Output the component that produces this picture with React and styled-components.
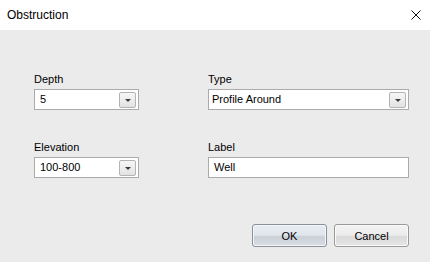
import React from "react";
import styled, { createGlobalStyle } from "styled-components";

const Global = createGlobalStyle`
  html, body { margin: 0; padding: 0; background: #ebebeb; }
  * { box-sizing: border-box; }
`;

const Window = styled.div`
  width: 430px;
  height: 262px;
  display: flex;
  flex-direction: column;
  background: #ebebeb;
  font-family: "Liberation Sans", Arial, sans-serif;
  font-size: 11px;
  color: #000;
  overflow: hidden;
`;

const TitleBar = styled.div`
  height: 30px;
  flex: none;
  background: #fff;
  display: flex;
  align-items: center;
  justify-content: space-between;
  padding: 0 9px 1px 7px;
`;

const Title = styled.span`
  font-family: "Segoe UI", "Liberation Sans", Arial, sans-serif;
  font-size: 12px;
  color: #000;
`;

const CloseIcon = styled.svg`
  width: 10px;
  height: 10px;
  display: block;
`;

const Body = styled.div`
  flex: 1;
  display: flex;
  flex-direction: column;
  padding: 43px 21px 0 34px;
`;

const FieldGrid = styled.div`
  display: grid;
  grid-template-columns: 105px 201px;
  column-gap: 69px;
  row-gap: 31px;
`;

const Field = styled.div`
  display: flex;
  flex-direction: column;
  gap: 3px;
`;

const Label = styled.label`
  height: 13px;
  line-height: 13px;
  white-space: nowrap;
`;

const Box = styled.div`
  height: 21px;
  background: #fff;
  border: 1px solid #ababab;
  display: flex;
  align-items: center;
  padding: 0 2px 0 ${(p) => p.$pad}px;
`;

const Value = styled.span`
  flex: 1;
  line-height: 19px;
  white-space: nowrap;
`;

const DropButton = styled.div`
  width: 17px;
  height: 16px;
  border: 1px solid #b4b4b4;
  border-radius: 2px;
  background: linear-gradient(#f6f6f6 0%, #ededed 50%, #e2e2e2 100%);
  display: flex;
  align-items: center;
  justify-content: center;
`;

const Arrow = styled.span`
  width: 0;
  height: 0;
  border-left: 3px solid transparent;
  border-right: 3px solid transparent;
  border-top: 3px solid #3c3c3c;
  margin-top: 1px;
`;

const ButtonRow = styled.div`
  display: flex;
  justify-content: flex-end;
  gap: 7px;
  margin-top: 46px;
`;

const Button = styled.button`
  width: 75px;
  height: 23px;
  font-family: "Liberation Sans", Arial, sans-serif;
  font-size: 11px;
  color: #000;
  border: 1px solid ${(p) => (p.$default ? "#8a9098" : "#9a9a9a")};
  border-radius: 3px;
  padding: 0;
  background: ${(p) =>
    p.$default
      ? "linear-gradient(#e7ecf1 0%, #e1e6ec 48%, #c9d0d8 56%, #d9dee4 100%)"
      : "linear-gradient(#f3f3f3 0%, #ececec 48%, #dadada 56%, #e6e6e6 100%)"};
  box-shadow: inset 0 0 0 1px ${(p) => (p.$default ? "#f3f6fa" : "#fafafa")};
`;

function Combo({ value, pad }) {
  return (
    <Box $pad={pad}>
      <Value>{value}</Value>
      <DropButton>
        <Arrow />
      </DropButton>
    </Box>
  );
}

export default function App() {
  return (
    <Window>
      <Global />
      <TitleBar>
        <Title>Obstruction</Title>
        <CloseIcon viewBox="0 0 10 10">
          <path d="M0.5 0.5 L9.5 9.5 M9.5 0.5 L0.5 9.5" stroke="#111" strokeWidth="1" fill="none" />
        </CloseIcon>
      </TitleBar>
      <Body>
        <FieldGrid>
          <Field>
            <Label>Depth</Label>
            <Combo value="5" pad={5} />
          </Field>
          <Field>
            <Label>Type</Label>
            <Combo value="Profile Around" pad={3} />
          </Field>
          <Field>
            <Label>Elevation</Label>
            <Combo value="100-800" pad={5} />
          </Field>
          <Field>
            <Label>Label</Label>
            <Box $pad={5}>
              <Value>Well</Value>
            </Box>
          </Field>
        </FieldGrid>
        <ButtonRow>
          <Button $default>OK</Button>
          <Button>Cancel</Button>
        </ButtonRow>
      </Body>
    </Window>
  );
}
